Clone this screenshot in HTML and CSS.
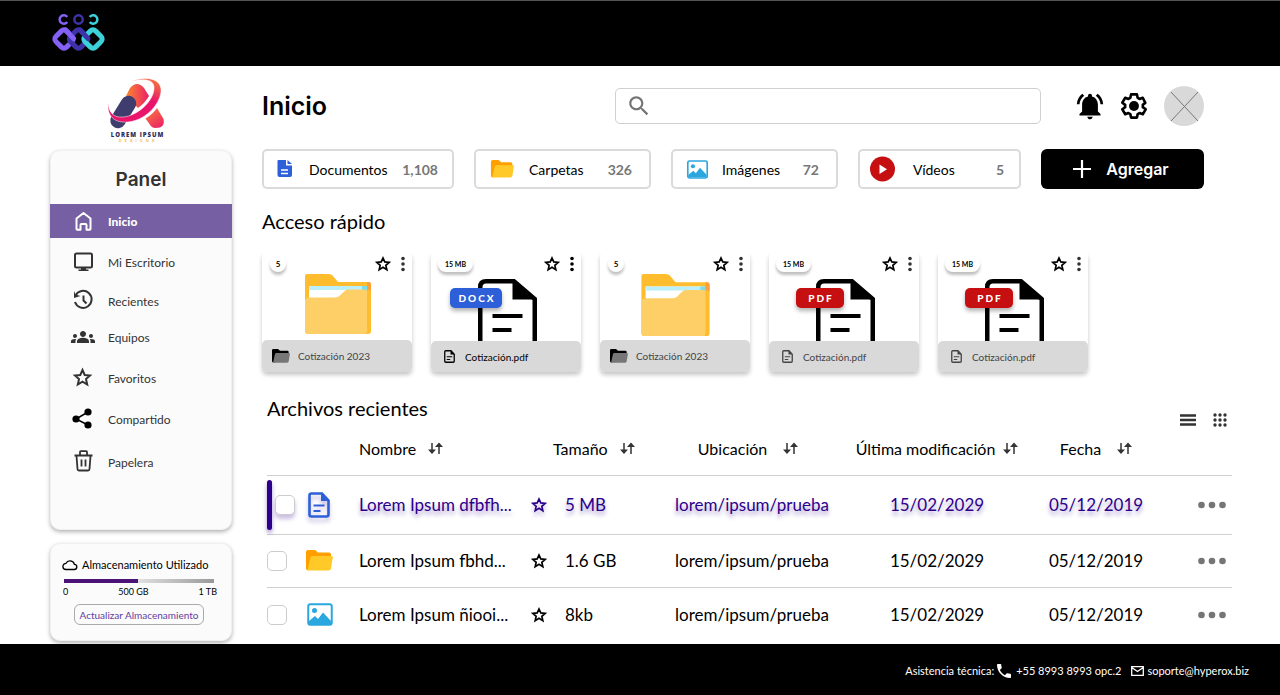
FILE: index.html
```html
<!DOCTYPE html>
<html lang="es">
<head>
<meta charset="utf-8">
<meta name="viewport" content="width=device-width, initial-scale=1">
<title>Inicio</title>
<link rel="stylesheet" href="styles.css">
</head>
<body>
<svg class="sprite" aria-hidden="true">
  <symbol id="star" viewBox="0 0 24 24"><path d="M12 4l2.400 5.300 5.800.6-4.400 3.900 1.300 5.700-5.100-3-5.100 3 1.300-5.700-4.400-3.900 5.800-.6z" fill="none" stroke="currentColor" stroke-width="2.300"/></symbol>
  <symbol id="kebab" viewBox="0 0 6 16"><circle cx="3" cy="2.500" r="1.800"/><circle cx="3" cy="8" r="1.800"/><circle cx="3" cy="13.500" r="1.800"/></symbol>
  <symbol id="sort" viewBox="0 0 15 13"><path d="M4 1v9M11 3v9" stroke="currentColor" stroke-width="1.500" fill="none"/><path d="M0 7.500h8L4 12zM7 5h8L11 .5z"/></symbol>
  <symbol id="dots" viewBox="0 0 28 8"><circle cx="3.500" cy="4" r="3.300"/><circle cx="14" cy="4" r="3.300"/><circle cx="24.500" cy="4" r="3.300"/></symbol>
  <symbol id="folder" viewBox="0 0 27 21"><path d="M2 0h7l3 2.500h11q2 0 2 2V9L2 20.500q-2-.5-2-2V2q0-2 2-2z" fill="#ffa000"/><path d="M6.500 6H25.500q1.500 0 1.300 1.500L25 18.500q-.4 2-2.400 2H1.500l3-13Q5 6 6.500 6z" fill="#ffca28"/></symbol>
  <symbol id="folder-dark" viewBox="0 0 27 21"><path d="M2 0h7l3 2.500h11q2 0 2 2V9L2 20.500q-2-.5-2-2V2q0-2 2-2z" fill="#000"/><path d="M6.500 6H25.500q1.500 0 1.300 1.500L25 18.500q-.4 2-2.400 2H1.500l3-13Q5 6 6.500 6z" fill="#777"/></symbol>
  <symbol id="image" viewBox="0 0 26 23"><rect x="1.250" y="1.250" width="23.500" height="20.500" rx="2" fill="#fff" stroke="#2ba7df" stroke-width="2"/><circle cx="7.500" cy="7.500" r="2.500" fill="#2ba7df"/><path d="M2 21v-3l6-5 3 3 5-6.500 8 8.500v3z" fill="#2ba7df"/></symbol>
  <symbol id="file" viewBox="0 0 22 26"><path d="M14 1.500H3.500q-2 0-2 2v19q0 2 2 2h15q2 0 2-2V8.500z" fill="none" stroke="currentColor" stroke-width="2.600"/><path d="M13 1v8h8zM5.500 12.500h11v2h-11zM5.500 18h7v2h-7z"/></symbol>
  <symbol id="big-folder" viewBox="0 0 66 60"><path d="M2 0h22q2 0 3.500 1.500L33 8h30q3 0 3 3v46q0 3-3 3H3q-3 0-3-3V2q0-2 2-2z" fill="#ffbd2e"/><path d="M62 8h2q2 0 2 3v6q-1-1.500-4-1.500z" fill="#ff9f3a"/><path d="M4 12h57v14H4z" fill="#fff"/><path d="M4 12h57v4H4z" fill="#b8effa"/><path d="M57 12h5v5h-5z" fill="#7cdce8"/><path d="M0 26q1-2.500 4-2.500h26q3 0 5-2l4-4q2-2 4-2h17q2 0 2 2V57q0 3-3 3H3q-3 0-3-3z" fill="#ffcf67"/></symbol>
  <symbol id="big-doc" viewBox="0 0 59 62"><path d="M2.250 62V8q0-5.750 5.750-5.750h28L56.750 20v42" fill="#fff" stroke="#000" stroke-width="4.500"/><path d="M34.500 1v19.500H58zM14.500 35h30v4h-30zM14.500 49h19v4h-19z"/></symbol>
</svg>

<header class="topbar">
  <svg class="brand" viewBox="51 12 56 42" role="img" aria-label="Marca" fill="none">
    <g stroke="#8560f6"><path d="M67.200 17a4.200 4.200 0 1 0 0 5" stroke-width="2.500"/><rect x="56.500" y="31.500" width="15" height="15" rx="3.500" transform="rotate(45 64 39)" stroke-width="5"/></g>
    <g stroke="#3d32a8"><circle cx="78.500" cy="19.500" r="4.200" stroke-width="2.500"/><rect x="71" y="31.500" width="15" height="15" rx="3.500" transform="rotate(45 78.500 39)" stroke-width="5"/></g>
    <path d="M65.500 30l8 8.500" stroke="#8560f6" stroke-width="5" stroke-linecap="round"/>
    <g stroke="#3dd2da"><path d="M89.800 17a4.200 4.200 0 1 1 0 5" stroke-width="2.500"/><rect x="85.500" y="31.500" width="15" height="15" rx="3.500" transform="rotate(45 93 39)" stroke-width="5"/></g>
    <path d="M80 30l8 8.500" stroke="#3d32a8" stroke-width="5" stroke-linecap="round"/>
  </svg>
</header>

<div class="page">
  <aside class="sidebar">
    <svg class="client-logo" viewBox="107 78 60 64" role="img" aria-label="Lorem Ipsum Designs">
      <defs>
        <linearGradient id="warm" x1="0" x2="1"><stop offset="0" stop-color="#f9872f"/><stop offset="1" stop-color="#ec1f66"/></linearGradient>
        <linearGradient id="leg" x1="0" y1="0" x2=".6" y2="1"><stop offset="0" stop-color="#f98139"/><stop offset="1" stop-color="#ee2a62"/></linearGradient>
        <linearGradient id="sweep" x1=".9" y1="0" x2=".4" y2=".8"><stop offset="0" stop-color="#f67a3d"/><stop offset=".5" stop-color="#e9156b"/></linearGradient>
      </defs>
      <path d="M126 96l4-8q7-8 14 0l5 8q-4 7-11 12z" fill="url(#warm)"/>
      <path d="M118 120.500l10.500-17" stroke="#3f3d6e" stroke-width="15.500" stroke-linecap="round"/>
      <path d="M157 108l6.500 11q2 9-8 9-4 0-6-4l-4-5.500q7-4 11.500-10.500z" fill="url(#leg)"/>
      <path d="M108 103c-1 15 8 20 20 19 20-2 34-21 33-33-1-11-16-13-29-8 14-3 23-1 22 8-1 13-17 27-31 28-10 1-14-5-15-14z" fill="url(#sweep)" stroke="#fff" stroke-width=".5"/>
      <text x="137.500" y="137" class="logo-name">LOREM IPSUM</text>
      <text x="138" y="142" class="logo-sub">DESIGNS</text>
    </svg>

    <nav class="panel" aria-labelledby="panel-title">
      <h2 class="panel-title" id="panel-title">Panel</h2>
      <ul class="menu">
        <li><a class="menu-link is-active" href="#" aria-current="page"><svg class="menu-icon" viewBox="0 0 24 24"><path d="M5.500 9.500l7-5.500 7 5.500V20q0 .8-.8.800h-3.200V16q0-1-1-1h-4q-1 0-1 1v4.800H6.300q-.8 0-.8-.8z" fill="none" stroke="currentColor" stroke-width="2" stroke-linejoin="round"/></svg>Inicio</a></li>
        <li><a class="menu-link" href="#"><svg class="menu-icon" viewBox="0 0 24 24"><rect x="4" y="3.500" width="17" height="14" rx="1.500" fill="none" stroke="currentColor" stroke-width="2"/><path d="M10 18h5v1.500h2.500V21h-10v-1.500H10z"/></svg>Mi Escritorio</a></li>
        <li><a class="menu-link" href="#"><svg class="menu-icon" viewBox="0 0 24 24"><path d="M4.500 6.500A8.500 8.500 0 1 1 4 13M12.500 6.500v5l3 3" fill="none" stroke="currentColor" stroke-width="2"/><path d="M3 2l1.500 3.500L9.500 7 3 9z"/></svg>Recientes</a></li>
        <li><a class="menu-link" href="#"><svg class="menu-icon" viewBox="0 0 24 24"><path d="M12 12.750c1.630 0 3.070.39 4.240.9 1.080.48 1.760 1.560 1.760 2.730V18H6v-1.610c0-1.180.68-2.260 1.760-2.730 1.170-.52 2.610-.91 4.240-.91zM4 13c1.100 0 2-.9 2-2s-.9-2-2-2-2 .9-2 2 .9 2 2 2zm1.130 1.100c-.37-.06-.74-.1-1.130-.1-.99 0-1.930.21-2.780.58C.48 14.900 0 15.620 0 16.430V18h4.500v-1.610c0-.83.23-1.610.63-2.290zM20 13c1.100 0 2-.9 2-2s-.9-2-2-2-2 .9-2 2 .9 2 2 2zm4 3.430c0-.81-.48-1.530-1.220-1.850-.85-.37-1.790-.58-2.780-.58-.39 0-.76.04-1.130.1.4.68.63 1.460.63 2.290V18H24v-1.570zM12 6c1.660 0 3 1.340 3 3s-1.340 3-3 3-3-1.340-3-3 1.340-3 3-3z"/></svg>Equipos</a></li>
        <li><a class="menu-link" href="#"><svg class="menu-icon" viewBox="0 0 24 24"><path d="M11.500 4l2.200 5 5.300.5-4 3.600 1.200 5.400-4.700-2.800-4.700 2.800L8 13.100 4 9.500 9.300 9z" fill="none" stroke="currentColor" stroke-width="2"/></svg>Favoritos</a></li>
        <li><a class="menu-link" href="#"><svg class="menu-icon" viewBox="0 0 24 24"><path d="M17 5L5 12l12 6" fill="none" stroke="#000" stroke-width="1.500"/><g fill="#000"><circle cx="17" cy="5" r="3.600"/><circle cx="5" cy="12" r="3.600"/><circle cx="17" cy="18" r="3.600"/></g></svg>Compartido</a></li>
        <li><a class="menu-link" href="#"><svg class="menu-icon" viewBox="0 0 24 24"><path d="M3.500 5.500h18M9 5V2q0-.8.800-.8h5.400q.8 0 .8.800v3M5.500 6l1 13q0 1.500 1.500 1.500h9q1.500 0 1.500-1.500l1-13M10.500 9.500v7M14.500 9.500v7" fill="none" stroke="currentColor" stroke-width="1.800"/></svg>Papelera</a></li>
      </ul>
    </nav>

    <section class="storage">
      <label class="storage-title" for="used"><svg class="cloud" viewBox="0 0 16 12"><path d="M4 10.500h8a2.600 2.600 0 0 0 .4-5.200A4.500 4.500 0 0 0 4 4.300 3.100 3.100 0 0 0 4 10.500z" fill="none" stroke="currentColor" stroke-width="1.300"/></svg>Almacenamiento Utilizado</label>
      <progress class="storage-bar" id="used" max="1000" value="490"></progress>
      <div class="storage-scale"><span>0</span><span>500 GB</span><span>1 TB</span></div>
      <button class="storage-button" type="button">Actualizar Almacenamiento</button>
    </section>
  </aside>

  <main class="main">
    <div class="toolbar">
      <h1 class="title">Inicio</h1>
      <label class="search"><svg class="search-icon" viewBox="0 0 24 24"><path d="M15.500 14h-.79l-.28-.27C15.410 12.590 16 11.110 16 9.500 16 5.910 13.090 3 9.500 3S3 5.910 3 9.500 5.910 16 9.500 16c1.610 0 3.090-.59 4.230-1.570l.27.28v.79l5 4.990L20.490 19l-4.990-5zm-6 0C7.010 14 5 11.990 5 9.500S7.010 5 9.500 5 14 7.010 14 9.500 11.990 14 9.500 14z"/></svg><input class="search-input" type="search" aria-label="Buscar"></label>
      <div class="tools">
        <button class="icon-button" type="button" aria-label="Notificaciones"><svg class="bell" viewBox="1.500 2 21 20.500"><path d="M7.580 4.080L6.150 2.650C3.750 4.480 2.170 7.300 2.030 10.500h2c.15-2.650 1.510-4.970 3.550-6.420zm12.390 6.420h2c-.15-3.200-1.730-6.020-4.120-7.850l-1.420 1.430c2.020 1.450 3.390 3.770 3.540 6.420zM18 11c0-3.070-1.640-5.640-4.500-6.320V4c0-.83-.67-1.500-1.500-1.500s-1.500.67-1.500 1.500v.68C7.630 5.360 6 7.920 6 11v5l-2 2v1h16v-1l-2-2v-5zm-6 11c.14 0 .27-.01.4-.04.65-.14 1.180-.58 1.440-1.180.1-.24.15-.5.15-.78h-4c.01 1.100.9 2 2.010 2z"/></svg></button>
        <button class="icon-button" type="button" aria-label="Configuración"><svg class="gear" viewBox="1 1 22 22"><path d="M19.430 12.980c.04-.32.07-.64.07-.98 0-.34-.03-.66-.07-.98l2.110-1.650-2.120-4.350-2.660 1.030c-.52-.4-1.080-.73-1.690-.98L14.500 2.200h-5l-.57 2.870c-.61.25-1.170.59-1.690.98L4.580 5.020 2.100 9.200l2.470 1.820c-.04.32-.07.65-.07.98 0 .33.03.66.07.98L2.100 14.800l2.480 4.180 2.660-1.030c.52.4 1.080.73 1.690.98l.57 2.870h5l.57-2.870c.61-.25 1.170-.59 1.690-.98l2.660 1.030 2.480-4.180z" fill="none" stroke="currentColor" stroke-width="2.200" stroke-linejoin="round"/><circle cx="12" cy="12" r="4.200"/></svg></button>
        <button class="avatar" type="button" aria-label="Perfil"><svg viewBox="0 0 40 40"><path d="M7 6l27 29M34 6L7 35" stroke="#777" fill="none"/></svg></button>
      </div>
    </div>

    <div class="filters">
      <button class="chip chip-docs" type="button"><svg class="chip-icon" viewBox="0 0 25 26"><path d="M6.500 4H14v5.500h6V19q0 2-2 2H7.500q-2 0-2-2V5q0-1 1-1zM15.500 4l4.500 4h-4.500z" fill="#2c5fd8"/><path d="M9 14h7M9 17.500h7" stroke="#fff" stroke-width="1.300"/></svg>Documentos<span class="count">1,108</span></button>
      <button class="chip chip-folders" type="button"><svg class="chip-icon chip-folder"><use href="#folder"/></svg>Carpetas<span class="count">326</span></button>
      <button class="chip chip-images" type="button"><svg class="chip-icon chip-image"><use href="#image"/></svg>Imágenes<span class="count">72</span></button>
      <button class="chip chip-videos" type="button"><svg class="chip-icon" viewBox="0 0 25 25"><circle cx="12.500" cy="12.500" r="12.500" fill="#c50f11"/><path d="M9.500 8v9.500l7.500-4.700z" fill="#fff"/></svg>Vídeos<span class="count">5</span></button>
      <button class="add" type="button"><svg class="plus" viewBox="0 0 18 18"><path d="M9 0v18M0 9h18" stroke="#fff" stroke-width="2.200"/></svg>Agregar</button>
    </div>

    <section class="quick">
      <h2 class="heading">Acceso rápido</h2>
      <div class="cards">
        <article class="card">
          <div class="card-top"><span class="pill">5</span><button class="mini mini-star" type="button" aria-label="Favorito"><svg><use href="#star"/></svg></button><button class="mini mini-more soft" type="button" aria-label="Más"><svg><use href="#kebab"/></svg></button></div>
          <svg class="art-folder"><use href="#big-folder"/></svg>
          <div class="card-name"><svg class="name-folder"><use href="#folder-dark"/></svg>Cotización 2023</div>
        </article>
        <article class="card">
          <div class="card-top"><span class="pill pill-wide">15 MB</span><button class="mini mini-star" type="button" aria-label="Favorito"><svg><use href="#star"/></svg></button><button class="mini mini-more" type="button" aria-label="Más"><svg><use href="#kebab"/></svg></button></div>
          <svg class="art-doc"><use href="#big-doc"/></svg><span class="type type-docx">DOCX</span>
          <div class="card-name card-name-file card-name-strong"><svg class="name-file"><use href="#file"/></svg>Cotización.pdf</div>
        </article>
        <article class="card">
          <div class="card-top"><span class="pill">5</span><button class="mini mini-star" type="button" aria-label="Favorito"><svg><use href="#star"/></svg></button><button class="mini mini-more soft" type="button" aria-label="Más"><svg><use href="#kebab"/></svg></button></div>
          <svg class="art-folder art-folder-large"><use href="#big-folder"/></svg>
          <div class="card-name"><svg class="name-folder"><use href="#folder-dark"/></svg>Cotización 2023</div>
        </article>
        <article class="card">
          <div class="card-top"><span class="pill pill-wide">15 MB</span><button class="mini mini-star" type="button" aria-label="Favorito"><svg><use href="#star"/></svg></button><button class="mini mini-more soft" type="button" aria-label="Más"><svg><use href="#kebab"/></svg></button></div>
          <svg class="art-doc"><use href="#big-doc"/></svg><span class="type type-pdf">PDF</span>
          <div class="card-name card-name-file"><svg class="name-file"><use href="#file"/></svg>Cotización.pdf</div>
        </article>
        <article class="card">
          <div class="card-top"><span class="pill pill-wide">15 MB</span><button class="mini mini-star" type="button" aria-label="Favorito"><svg><use href="#star"/></svg></button><button class="mini mini-more soft" type="button" aria-label="Más"><svg><use href="#kebab"/></svg></button></div>
          <svg class="art-doc"><use href="#big-doc"/></svg><span class="type type-pdf">PDF</span>
          <div class="card-name card-name-file"><svg class="name-file"><use href="#file"/></svg>Cotización.pdf</div>
        </article>
      </div>
    </section>

    <section class="recent">
      <div class="recent-head">
        <h2 class="heading">Archivos recientes</h2>
        <div class="views">
          <button class="view" type="button" aria-label="Lista"><svg viewBox="0 0 16 14"><path d="M0 2.500h16M0 7h16M0 11.500h16" stroke="currentColor" stroke-width="2.600"/></svg></button>
          <button class="view" type="button" aria-label="Cuadrícula"><svg viewBox="0 0 16 14"><path d="M3 2h.01M8 2h.01M13 2h.01M3 7h.01M8 7h.01M13 7h.01M3 12h.01M8 12h.01M13 12h.01" stroke="currentColor" stroke-width="3.400" stroke-linecap="round"/></svg></button>
        </div>
      </div>
      <table class="files">
        <colgroup><col class="c-check"><col class="c-icon"><col class="c-name"><col class="c-star"><col class="c-size"><col class="c-place"><col class="c-mod"><col class="c-date"><col class="c-more"></colgroup>
        <thead>
          <tr><th></th><th></th>
            <th scope="col" class="left"><button class="sort" type="button">Nombre<svg><use href="#sort"/></svg></button></th><th></th>
            <th scope="col" class="left"><button class="sort" type="button">Tamaño<svg><use href="#sort"/></svg></button></th>
            <th scope="col" class="place"><button class="sort sort-wide" type="button">Ubicación<svg><use href="#sort"/></svg></button></th>
            <th scope="col"><button class="sort sort-tight" type="button">Última modificación<svg><use href="#sort"/></svg></button></th>
            <th scope="col"><button class="sort sort-wide" type="button">Fecha<svg><use href="#sort"/></svg></button></th><th></th></tr>
        </thead>
        <tbody>
          <tr class="row-first is-selected"><td class="check-cell"><input class="check" type="checkbox" aria-label="Lorem Ipsum dfbfh..."></td><td><svg class="row-file"><use href="#file"/></svg></td><td>Lorem Ipsum dfbfh...</td><td><button class="row-star" type="button" aria-label="Favorito"><svg><use href="#star"/></svg></button></td><td class="size">5 MB</td><td class="center">lorem/ipsum/prueba</td><td class="center">15/02/2029</td><td class="center">05/12/2019</td><td><button class="more" type="button" aria-label="Opciones"><svg><use href="#dots"/></svg></button></td></tr>
          <tr class="row-second"><td><input class="check" type="checkbox" aria-label="Lorem Ipsum fbhd..."></td><td><svg class="row-folder"><use href="#folder"/></svg></td><td>Lorem Ipsum fbhd...</td><td><button class="row-star" type="button" aria-label="Favorito"><svg><use href="#star"/></svg></button></td><td class="size">1.6 GB</td><td class="center">lorem/ipsum/prueba</td><td class="center">15/02/2029</td><td class="center">05/12/2019</td><td><button class="more" type="button" aria-label="Opciones"><svg><use href="#dots"/></svg></button></td></tr>
          <tr class="row-last"><td><input class="check" type="checkbox" aria-label="Lorem Ipsum ñiooi..."></td><td><svg class="row-image"><use href="#image"/></svg></td><td>Lorem Ipsum ñiooi...</td><td><button class="row-star" type="button" aria-label="Favorito"><svg><use href="#star"/></svg></button></td><td class="size">8kb</td><td class="center">lorem/ipsum/prueba</td><td class="center">15/02/2029</td><td class="center">05/12/2019</td><td><button class="more" type="button" aria-label="Opciones"><svg><use href="#dots"/></svg></button></td></tr>
        </tbody>
      </table>
    </section>
  </main>
</div>

<footer class="footer">
  <span>Asistencia técnica:</span>
  <svg class="phone" viewBox="3 3 18 18"><path d="M6.620 10.790c1.440 2.830 3.760 5.140 6.590 6.590l2.200-2.200c.27-.27.67-.36 1.020-.24 1.120.37 2.330.57 3.570.57.55 0 1 .45 1 1V20c0 .55-.45 1-1 1-9.390 0-17-7.610-17-17 0-.55.45-1 1-1h3.500c.55 0 1 .45 1 1 0 1.250.2 2.450.57 3.570.11.35.03.74-.25 1.020l-2.200 2.200z"/></svg>
  <a class="footer-link" href="tel:+5589938993">+55 8993 8993 opc.2</a>
  <svg class="mail" viewBox="0 0 13 10"><path d="M.7.700h11.600v8.600H.7zM.7 1.500l5.800 4 5.800-4" fill="none" stroke="currentColor" stroke-width="1.300"/></svg>
  <a class="footer-link" href="mailto:soporte@hyperox.biz">soporte@hyperox.biz</a>
</footer>
</body>
</html>
```
FILE: styles.css
```css
* { box-sizing: border-box; }

body {
  margin: 0;
  min-height: 100vh;
  display: flex;
  flex-direction: column;
  background: #fff;
  color: #000;
  font-family: Lato, "Liberation Sans", sans-serif;
  font-size: 17px;
}

h1, h2, ul { margin: 0; padding: 0; }
ul { list-style: none; }
svg { display: block; fill: currentColor; flex: none; }
a { color: inherit; text-decoration: none; }
button { margin: 0; padding: 0; border: 0; background: none; color: inherit; font: inherit; cursor: pointer; }
.sprite { position: absolute; width: 0; height: 0; }

/* Top bar */
.topbar { height: 66px; padding: 11px 51px; background: #000; border-top: 1px solid #555; }
.brand { width: 56px; height: 42px; fill: none; }

.page { flex: 1; display: flex; }

/* Sidebar */
.sidebar { flex: none; width: 232px; padding: 12px 0 3px 50px; }
.client-logo { width: 60px; height: 64px; margin: 0 auto 8px 57px; }
.logo-name { font: 800 6px "Open Sans", sans-serif; letter-spacing: 1px; fill: #2f2d5c; text-anchor: middle; }
.logo-sub { font: 700 4px Inter, sans-serif; letter-spacing: 3px; fill: #efc668; text-anchor: middle; }
.panel, .storage {
  background: #fbfbfb;
  border: 1px solid #f0f0f0;
  border-radius: 10px;
  box-shadow: 0 2px 4px rgba(0, 0, 0, .3);
}
.panel { min-height: 380px; margin-bottom: 13px; }
.panel-title { padding-top: 4px; color: #333; font: 600 19px/49px Inter, sans-serif; text-align: center; }
.menu { display: grid; grid-template-rows: 34px 48px 30px 42px 40px 42px 44px; font-size: 12px; color: #333; }
.menu-link { height: 100%; padding-left: 20px; display: flex; align-items: center; gap: 13px; }
.menu-icon { width: 24px; height: 24px; }
.is-active { margin: 0 -1px; padding-left: 21px; background: #775fa3; color: #fff; font-weight: 900; }

.storage { padding: 13px 13px 15px; font-size: 9px; }
.storage-title { display: flex; align-items: center; gap: 4px; margin-left: -2px; font-size: 11px; line-height: 16px; white-space: nowrap; }
.cloud { width: 16px; height: 12px; }
.storage-bar { display: block; width: 150px; height: 4px; margin-top: 6px; border: 0; appearance: none; }
.storage-bar::-webkit-progress-bar { background: linear-gradient(90deg, #eee 40%, #999); }
.storage-bar::-webkit-progress-value { background: #4b1278; }
.storage-scale { display: flex; justify-content: space-between; margin: 3px 1px 0 -1px; line-height: 11px; }
.storage-button {
  display: block;
  width: 130px;
  height: 21px;
  margin: 7px auto 0 10px;
  border: 1px solid #aaa;
  border-radius: 6px;
  color: #5f3da0;
  font-size: 10px;
  white-space: nowrap;
}

/* Main column */
.main { flex: 1; min-width: 0; padding: 20px 48px 0 30px; }
.toolbar, .filters { margin-right: 28px; }
.toolbar { display: flex; align-items: center; height: 40px; }
.title { flex: 354 1 0; font: 600 25px/40px Inter, sans-serif; }
.search { flex: 425 1 0; min-width: 0; height: 36px; display: flex; align-items: center; border: 1px solid #d0d0d0; border-radius: 5px; }
.search-icon { width: 26px; height: 26px; margin-left: 10px; fill: #757575; }
.search-input { flex: 1; min-width: 0; height: 32px; padding: 0 8px; border: 0; outline: 0; background: none; font: inherit; }
.tools { flex: 163 1 0; display: flex; align-items: center; justify-content: flex-end; }
.icon-button { margin-right: 17px; }
.bell { width: 28px; height: 27px; }
.gear { width: 26px; height: 26px; }
.avatar { width: 40px; height: 40px; border-radius: 50%; background: #d9d9d9; }

.filters { display: grid; grid-template-columns: 192fr 177fr 167fr 163fr 163fr; gap: 20px; margin-top: 23px; }
.chip { height: 40px; display: flex; align-items: center; border: 2px solid #dadada; border-radius: 5px; font-size: 14px; padding: 0 17px 0 14px; }
.chip-icon { width: 25px; height: 26px; margin-right: 12px; }
.chip-docs { padding: 0 14px 0 8px; }
.chip-images { padding-left: 12px; }
.chip-videos { padding: 0 15px 0 10px; }
.chip-folder { height: 18px; margin-right: 14px; }
.chip-image { height: 19px; }
.chip-videos .chip-icon { margin-right: 18px; }
.count { margin-left: auto; color: #777; font-weight: 700; }
.add { height: 40px; padding-right: 3px; display: flex; align-items: center; justify-content: center; gap: 15px; border-radius: 6px; background: #000; color: #fff; font: 600 16px Inter, sans-serif; }
.plus { width: 18px; height: 18px; }

.heading { font-size: 20px; font-weight: 400; line-height: 24px; }
.quick { margin-top: 20px; }

/* Quick access cards */
.cards { display: flex; gap: 19px; margin-top: 19px; }
.card { position: relative; width: 150px; height: 120px; display: flex; flex-direction: column; border-radius: 5px; background: #fff; box-shadow: 0 3px 4px rgba(0, 0, 0, .22); }
.card::before { content: ""; position: absolute; inset: -4px 0 auto; height: 6px; background: #fff; }
.card-top { position: relative; flex: none; height: 22px; padding: 2px 6px 0 7px; display: flex; align-items: center; }
.pill { min-width: 16px; height: 16px; margin-right: auto; border-radius: 8px; background: #fff; box-shadow: 0 3px 3px rgba(0, 0, 0, .25); font-size: 8px; font-weight: 700; line-height: 16px; text-align: center; }
.pill:not(.pill-wide) { margin-left: 1px; }
.pill-wide { width: 35px; font-size: 7px; }
.mini-star svg { width: 18px; height: 18px; }
.mini-more { margin-left: 8px; }
.mini-more svg { width: 6px; height: 16px; }
.soft { color: #333; }
.art-folder { width: 66px; height: 60px; margin-left: 43px; }
.art-folder-large { width: 69px; height: 62px; margin-left: 41px; }
.art-doc { width: 59px; height: 62px; margin: 5px 0 0 47px; }
.type { position: absolute; top: 36px; height: 20px; border-radius: 5px; color: #fff; box-shadow: 0 3px 4px rgba(0, 0, 0, .3); font-size: 10px; font-weight: 900; line-height: 20px; letter-spacing: 2px; text-align: center; text-indent: 2px; }
.type-docx { left: 19px; width: 52px; background: #2c5fd8; }
.type-pdf { left: 27px; width: 48px; background: #c50f11; }
.card-name { position: relative; height: 32px; margin-top: auto; display: flex; align-items: center; gap: 8px; padding-left: 10px; border-radius: 5px; background: #d9d9d9; color: #444; font-size: 10px; }
.card-name-file { padding-left: 13px; gap: 10px; }
.card-name-strong { color: #000; }
.name-folder { width: 18px; height: 14px; }
.name-file { width: 11px; height: 13px; }

/* Recent files */
.recent { margin: 24px 0 0 5px; }
.recent-head { display: flex; justify-content: space-between; height: 31px; }
.views { display: flex; align-items: flex-end; gap: 16px; padding-right: 4px; color: #333; }
.view svg { width: 16px; height: 14px; }
.files { width: 100%; table-layout: fixed; border-collapse: collapse; }
.c-check { width: 39px; }
.c-icon { width: 53px; }
.c-star { width: 30px; }
.c-size { width: 107px; }
.c-place { width: 184px; }
.c-mod { width: 186px; }
.c-date { width: 132px; }
.c-more { width: 70px; }
.files th { height: 48px; padding: 0 0 4px; font-size: 16px; font-weight: 400; text-align: center; }
.files .left { text-align: left; }
.files .place { padding-right: 8px; }
.files td { padding: 0; white-space: nowrap; }
.files .center { text-align: center; }
.files .size { padding-left: 12px; }
.files tr { border-bottom: 1px solid #d0d0d0; }
.files .row-last { border-bottom: 0; }
.row-first td { height: 59px; }
.row-second td { height: 53px; }
.row-last td { height: 55px; }
.sort { display: inline-flex; align-items: center; gap: 12px; white-space: nowrap; }
.sort svg { width: 15px; height: 13px; color: #333; }
.sort-wide { gap: 16px; }
.sort-tight { gap: 8px; }
.check { display: block; width: 20px; height: 20px; margin: 0; appearance: none; border: 1px solid #ccc; border-radius: 5px; background: #fff; }
.row-file { width: 22px; height: 26px; margin-left: 2px; color: #2c5fd8; }
.row-folder { width: 27px; height: 21px; }
.row-image { width: 26px; height: 23px; margin-left: 1px; }
.row-star { display: block; margin-left: 7px; }
.row-star svg { width: 18px; height: 18px; }
.more { display: block; margin-left: 36px; color: #757575; }
.more svg { width: 28px; height: 8px; }
.is-selected td { color: #2d008c; text-shadow: 0 4px 4px rgba(45, 0, 140, .4); }
.is-selected .row-file { color: #2c5fd8; }
.is-selected .check, .is-selected .row-file, .is-selected .row-star { filter: drop-shadow(0 4px 2px rgba(45, 0, 140, .25)); }
.check-cell { position: relative; }
.check-cell .check { margin-left: 8px; }
.check-cell::before { content: ""; position: absolute; left: 0; top: 4px; bottom: 4px; width: 5px; border-radius: 3px; background: #2d008c; box-shadow: 0 3px 4px rgba(45, 0, 140, .4); }

/* Footer */
.footer { height: 51px; padding: 2px 31px 0 0; display: flex; align-items: center; justify-content: flex-end; background: #000; color: #fff; font-size: 11px; }
.phone { width: 14px; height: 14px; margin: 0 5px 0 3px; }
.mail { width: 13px; height: 10px; margin: 0 3px 0 10px; }
```
